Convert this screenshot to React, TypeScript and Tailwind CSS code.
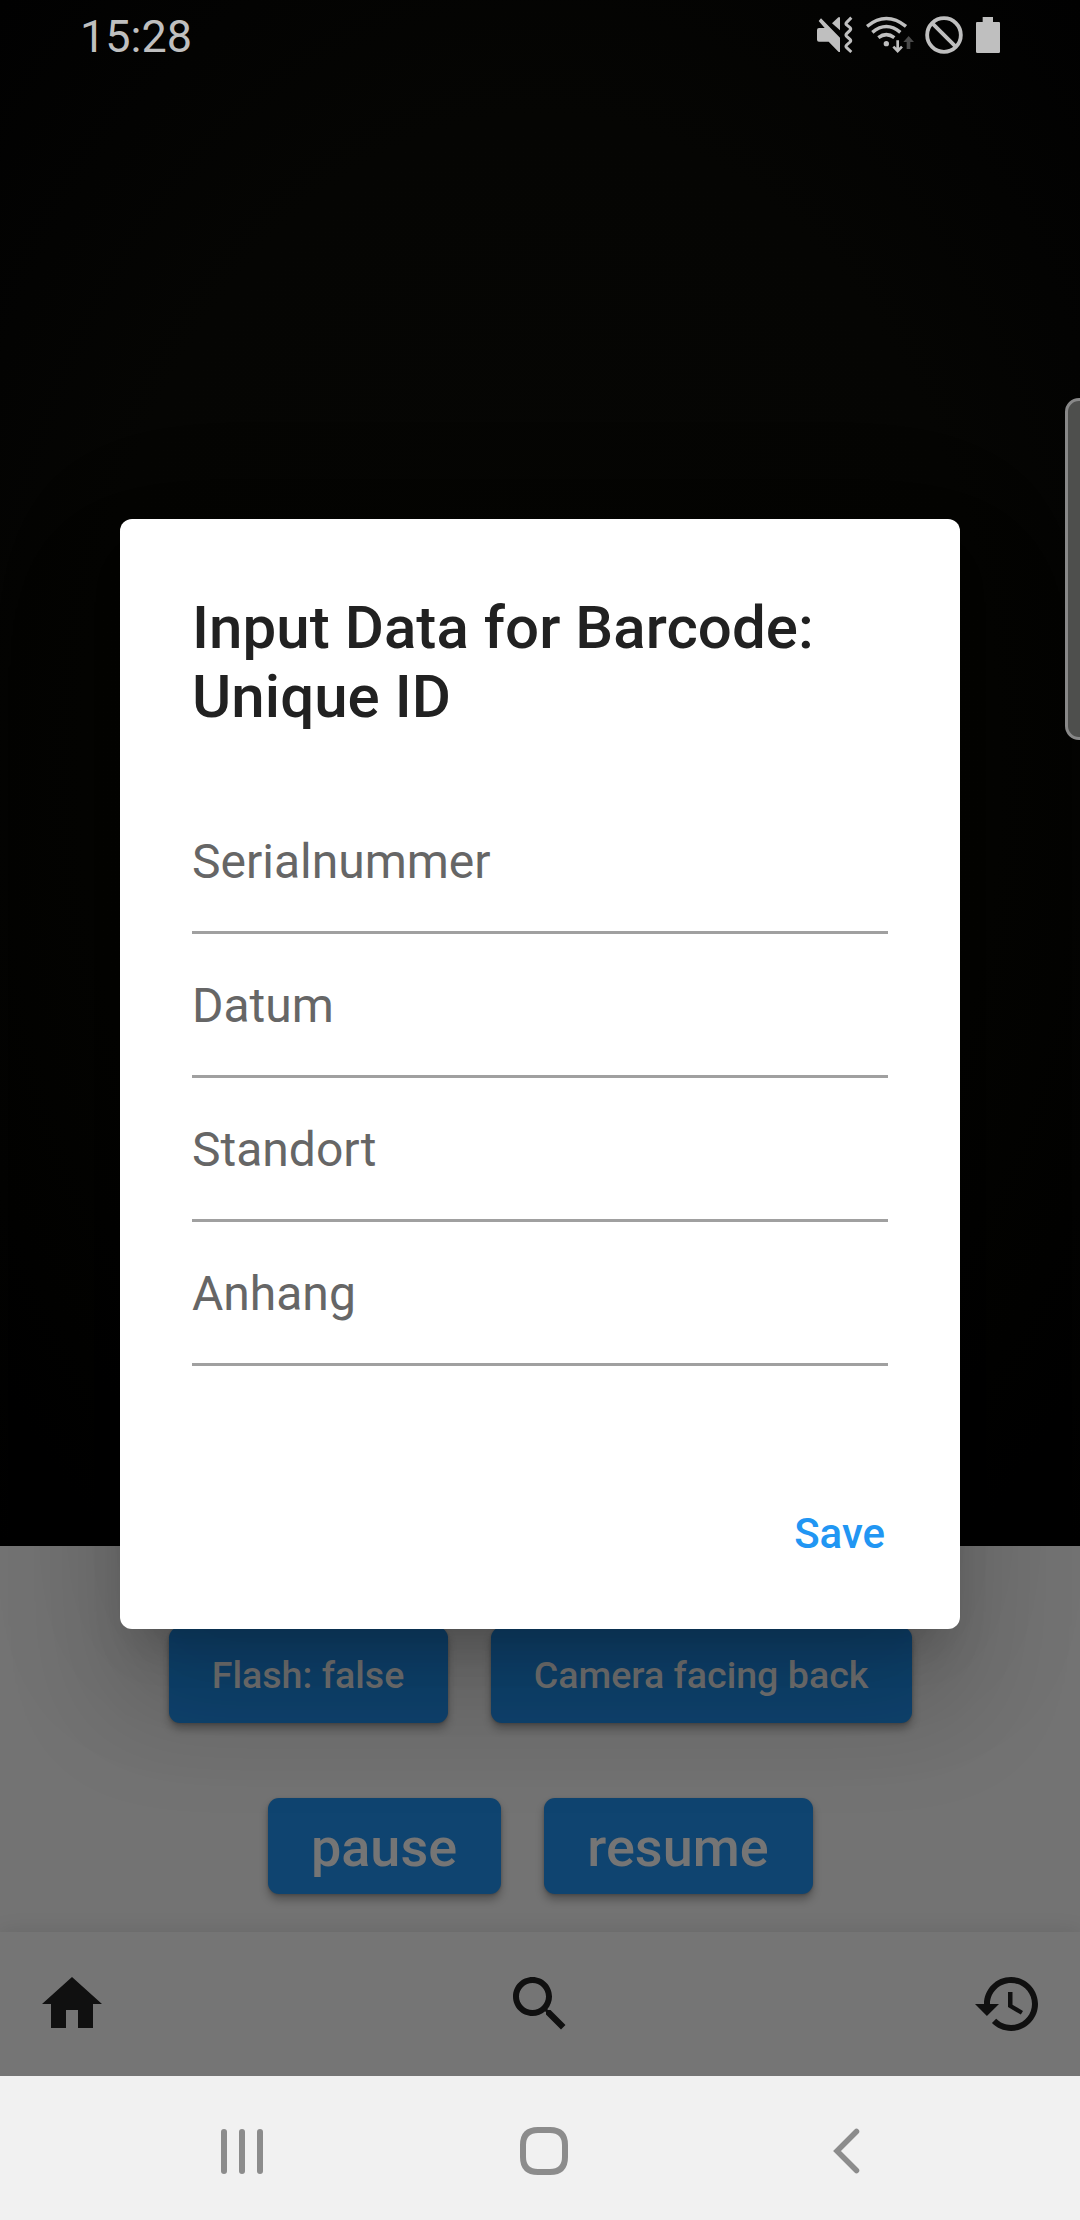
import type { ReactNode } from "react";

const fields = ["Serialnummer", "Datum", "Standort", "Anhang"];

function StatusBar() {
  return (
    <header className="flex h-[72px] items-start justify-between pl-[80px] pr-[80px] text-[#bfbfbf]">
      <span className="mt-[10px] text-[45px] leading-[54px]">15:28</span>
      <div className="flex pt-[16px]">
        <svg className="mr-[13px] h-[37px] w-[36px]" viewBox="54 48 108 111" fill="currentColor">
          <path d="M57 84H77L59 63L66 55L123 113V156H119L89 125H60Q54 125 54 119V90Q54 84 60 84Z" />
          <path d="M118 52H123V91L99 70Z" />
          <path d="M157 53L143 67Q139 71 143 75L153 83Q157 87 153 91L143 101Q139 105 143 109L153 118Q157 122 153 126L143 135Q139 139 143 143L157 156" fill="none" stroke="currentColor" strokeWidth="9" />
        </svg>
        <svg className="mr-[10px] h-[37px] w-[49px]" viewBox="201 48 147 111">
          <g fill="none" stroke="currentColor" strokeWidth="10.500">
            <path d="M204 79Q262 32 321 79" />
            <path d="M220 97Q262 62 304 97" />
            <path d="M238 113Q262 95 286 113" />
          </g>
          <circle cx="262" cy="131" r="8" fill="currentColor" />
          <path d="M296 121V154M283 140L296 153L309 140" fill="none" stroke="currentColor" strokeWidth="8" />
          <path d="M329 108L345 126H334V147H323V126H313Z" fill="#4a4a4a" />
        </svg>
        <svg className="mr-[13px] h-[38px] w-[38px]" viewBox="375 48 114 114" fill="none" stroke="currentColor" strokeWidth="11.500">
          <circle cx="432" cy="105" r="50.500" />
          <path d="M397 70L467 140" />
        </svg>
        <svg className="mt-px h-[36px] w-[24px]" viewBox="528 51 72 108" fill="currentColor">
          <path d="M548 51H579V66H597Q600 66 600 70V155Q600 159 596 159H532Q528 159 528 155V70Q528 66 531 66H548Z" />
        </svg>
      </div>
    </header>
  );
}

function ActionButton({ className, children }: { className: string; children: ReactNode }) {
  return (
    <button
      className={`flex items-center justify-center rounded-[11px] bg-[#0f4470] text-[#757575] shadow-[0_6px_8px_rgba(0,0,0,0.28),0_1px_3px_rgba(0,0,0,0.2)] ${className}`}
    >
      {children}
    </button>
  );
}

function BottomBar() {
  return (
    <nav className="flex h-[144px] items-center justify-between bg-[#757575] px-[36px] text-[#101010] shadow-[0_0_20px_rgba(0,0,0,0.1)]">
      <svg className="size-[72px]" viewBox="0 0 24 24" fill="currentColor">
        <path d="M10 20v-6h4v6h5v-8h3L12 3 2 12h3v8z" />
      </svg>
      <svg className="size-[72px]" viewBox="0 0 24 24" fill="currentColor">
        <path d="M15.500 14h-.79l-.28-.27C15.410 12.590 16 11.110 16 9.500 16 5.910 13.090 3 9.500 3S3 5.910 3 9.500 5.910 16 9.500 16c1.610 0 3.090-.59 4.230-1.570l.27.28v.79l5 4.990L20.490 19l-4.990-5zm-6 0C7.010 14 5 11.990 5 9.500S7.010 5 9.500 5 14 7.010 14 9.500 11.990 14 9.500 14z" />
      </svg>
      <svg className="size-[72px]" viewBox="0 0 24 24" fill="currentColor">
        <path d="M13 3c-4.970 0-9 4.030-9 9H1l3.890 3.890.07.14L9 12H6c0-3.870 3.130-7 7-7s7 3.130 7 7-3.130 7-7 7c-1.930 0-3.680-.79-4.940-2.060l-1.420 1.420C8.270 19.990 10.510 21 13 21c4.970 0 9-4.030 9-9s-4.030-9-9-9zm-1 5v5l4.280 2.540.72-1.210-3.500-2.080V8H12z" />
      </svg>
    </nav>
  );
}

function SystemNav() {
  return (
    <footer className="flex h-[144px] items-center bg-[#f1f1f1] pt-[6px] pl-[221px] text-[#8c8c8c]">
      <div className="flex h-[45px] w-[42px] gap-[12px]">
        <i className="w-[6px] rounded-full bg-[#8c8c8c]" />
        <i className="w-[6px] rounded-full bg-[#8c8c8c]" />
        <i className="w-[6px] rounded-full bg-[#8c8c8c]" />
      </div>
      <svg className="ml-[257px] size-[48px]" viewBox="0 0 48 48" fill="none" stroke="currentColor" strokeWidth="6">
        <path d="M18 3H30Q45 3 45 18V30Q45 45 30 45H18Q3 45 3 30V18Q3 3 18 3Z" />
      </svg>
      <svg className="ml-[264px] h-[46px] w-[30px]" viewBox="0 0 30 46" fill="none" stroke="currentColor" strokeWidth="5.500" strokeLinecap="round">
        <path d="M24.500 3.500L5 23L24.500 42.500" />
      </svg>
    </footer>
  );
}

function InputDialog() {
  return (
    <section
      role="dialog"
      className="absolute top-[519px] left-[120px] flex h-[1110px] w-[840px] flex-col rounded-[12px] bg-white px-[72px] pt-[74px] shadow-[0_33px_45px_-21px_rgba(0,0,0,0.2),0_72px_114px_9px_rgba(0,0,0,0.14),0_27px_138px_24px_rgba(0,0,0,0.06)]"
    >
      <h1 className="text-[60px] leading-[69px] font-medium tracking-[0.06px] text-[#212121]">
        Input Data for Barcode:
        <br />
        Unique ID
      </h1>
      <div className="mt-[59px]">
        {fields.map((label) => (
          <label
            key={label}
            className="flex h-[144px] flex-col justify-end border-b-[3px] border-[#a0a0a0] pb-[41px] text-[48px] leading-[56px] text-[#666666]"
          >
            {label}
          </label>
        ))}
      </div>
      <button className="mt-[143px] mr-[3px] self-end text-[42px] leading-[50px] font-medium text-[#2196f3]">
        Save
      </button>
    </section>
  );
}

export default function App() {
  return (
    <div className="relative flex h-[2220px] w-[1080px] flex-col overflow-hidden bg-[#737373] font-[Roboto,sans-serif]">
      <div className="h-[1546px] bg-[radial-gradient(#060604_0%,#050503_60%,#010101_100%)]">
        <StatusBar />
      </div>
      <main className="flex h-[386px] flex-col items-center gap-[75px] pt-[81px]">
        <div className="flex gap-[43px]">
          <ActionButton className="h-[96px] w-[279px] text-[37.6px] font-medium">Flash: false</ActionButton>
          <ActionButton className="h-[96px] w-[421px] text-[37.6px] font-medium">Camera facing back</ActionButton>
        </div>
        <div className="flex gap-[43px]">
          <ActionButton className="h-[96px] w-[233px] pt-[2px] text-[54px] font-medium">pause</ActionButton>
          <ActionButton className="h-[96px] w-[269px] pt-[2px] text-[54px] font-medium">resume</ActionButton>
        </div>
      </main>
      <BottomBar />
      <SystemNav />
      <InputDialog />
      <div className="absolute top-[398px] -right-[10px] h-[342px] w-[25px] rounded-l-[14px] border-[3px] border-[#888888] bg-[#4e4f4d]" />
    </div>
  );
}
